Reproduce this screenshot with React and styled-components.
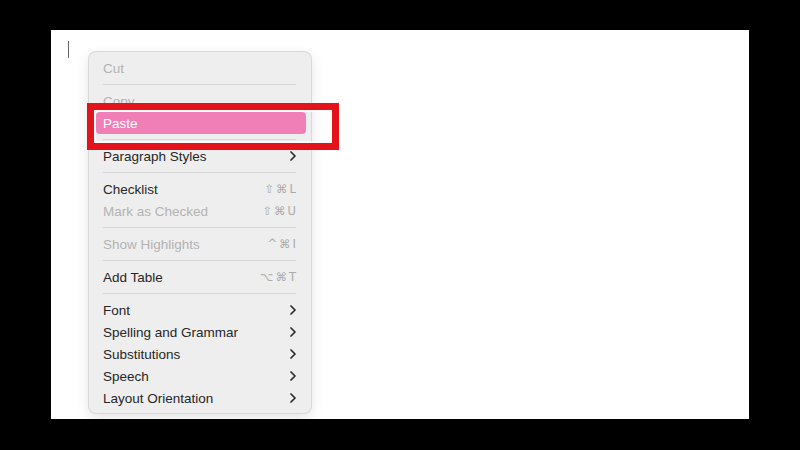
import React from "react";
import styled, { createGlobalStyle } from "styled-components";

const Global = createGlobalStyle`
  html, body { margin: 0; padding: 0; background: #000; }
  #root { width: 800px; height: 450px; }
`;

const Page = styled.div`
  box-sizing: border-box;
  width: 800px;
  height: 450px;
  background: #000;
  padding: 30px 51px 31px 51px;
  display: flex;
`;

const Panel = styled.div`
  position: relative;
  flex: 1;
  background: #fff;
  padding: 11px 0 0 17px;
  box-sizing: border-box;
`;

const Caret = styled.div`
  width: 1px;
  height: 17px;
  background: #666;
`;

const Menu = styled.div`
  position: absolute;
  left: 38px;
  top: 22px;
  width: 222px;
  box-sizing: border-box;
  padding: 5px 0 4px 0;
  background: #eeeeee;
  border-radius: 7px;
  box-shadow: 0 0 0 1px #d9d9d9, 0 4px 14px rgba(0, 0, 0, 0.12);
  font-family: "Liberation Sans", Arial, sans-serif;
  font-size: 13.5px;
`;

const Row = styled.div`
  height: 22px;
  margin: 0 5px 0 7px;
  padding: 0 10px 0 7px;
  display: flex;
  align-items: center;
  justify-content: space-between;
  border-radius: 4px;
  color: ${(p) => (p.$active ? "#fff" : p.$disabled ? "#b3b3b3" : "#262626")};
  background: ${(p) => (p.$active ? "#f07fb7" : "transparent")};
`;

const Sep = styled.div`
  height: 1px;
  margin: 5px 15px 5px 14px;
  background: #d6d6d6;
`;

const Shortcut = styled.span`
  display: flex;
  gap: 2px;
  font-family: "DejaVu Sans", sans-serif;
  font-size: 11.5px;
  color: #aaaaaa;
`;

const Highlight = styled.div`
  position: absolute;
  left: 36px;
  top: 73px;
  width: 252px;
  height: 47px;
  box-sizing: border-box;
  border: 7px solid #e3121b;
  box-shadow: inset 0 0 0 2px rgba(255, 255, 255, 0.7);
  pointer-events: none;
`;

const Chevron = () => (
  <svg width="6" height="10" viewBox="0 0 6 10">
    <path d="M1 1 L5 5 L1 9" fill="none" stroke="#2a2a2a" strokeWidth="1.7" strokeLinecap="round" strokeLinejoin="round" />
  </svg>
);

const Keys = ({ k }) => (
  <Shortcut>
    {k.map((c, i) => (
      <span key={i}>{c}</span>
    ))}
  </Shortcut>
);

const items = [
  { t: "Cut", d: true },
  { sep: true },
  { t: "Copy", d: true },
  { t: "Paste", a: true },
  { sep: true },
  { t: "Paragraph Styles", sub: true },
  { sep: true },
  { t: "Checklist", k: ["⇧", "⌘", "L"] },
  { t: "Mark as Checked", d: true, k: ["⇧", "⌘", "U"] },
  { sep: true },
  { t: "Show Highlights", d: true, k: ["^", "⌘", "I"] },
  { sep: true },
  { t: "Add Table", k: ["⌥", "⌘", "T"] },
  { sep: true },
  { t: "Font", sub: true },
  { t: "Spelling and Grammar", sub: true },
  { t: "Substitutions", sub: true },
  { t: "Speech", sub: true },
  { t: "Layout Orientation", sub: true },
];

export default function App() {
  return (
    <>
      <Global />
      <Page>
        <Panel>
          <Caret />
          <Menu>
            {items.map((it, i) =>
              it.sep ? (
                <Sep key={i} />
              ) : (
                <Row key={i} $disabled={it.d} $active={it.a}>
                  <span>{it.t}</span>
                  {it.sub && <Chevron />}
                  {it.k && <Keys k={it.k} />}
                </Row>
              )
            )}
          </Menu>
          <Highlight />
        </Panel>
      </Page>
    </>
  );
}
